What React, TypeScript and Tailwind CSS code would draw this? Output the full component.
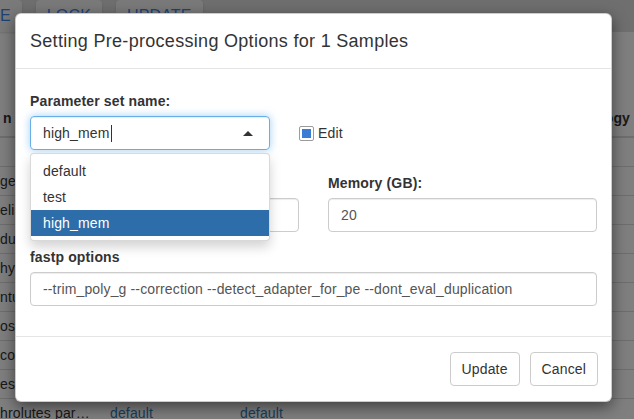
import React from "react";

const rows = [
  { name: "", a: "", b: "" },
  { name: "gerium sp.", a: "default", b: "default" },
  { name: "elisiae", a: "default", b: "default" },
  { name: "duluensis", a: "default", b: "default" },
  { name: "hyrii", a: "default", b: "default" },
  { name: "ntum", a: "default", b: "default" },
  { name: "osus", a: "default", b: "default" },
  { name: "coli", a: "default", b: "default" },
  { name: "es", a: "default", b: "default" },
  { name: "hrolutes parasiticus", a: "default", b: "default" },
];

const options = ["default", "test", "high_mem"];

const BackgroundPage = () => (
  <div className="flex flex-col">
    {/* Toolbar */}
    <div className="flex h-[32px] items-start gap-[14px] bg-[#dedede]">
      <button className="-ml-[11px] h-[32px] rounded-[4px] bg-[#f5f5f5] px-[11px] text-[16px] uppercase text-[#3d84ee] shadow">
        E
      </button>
      <button className="h-[32px] rounded-[4px] bg-[#f5f5f5] px-[11px] text-[16px] uppercase text-[#3d84ee] shadow">
        Lock
      </button>
      <button className="h-[32px] rounded-[4px] bg-[#f5f5f5] px-[11px] text-[16px] uppercase text-[#3d84ee] shadow">
        Update
      </button>
    </div>

    <div className="h-[68px]" />

    {/* Table */}
    <div className="flex h-[38px] items-center border-b-2 border-[#ddd] font-bold">
      <div className="w-[102px] pl-[3px]">n</div>
      <div className="w-[130px] px-2">Parameter</div>
      <div className="flex-1 px-2">Preset</div>
      <div className="pr-[4px] text-right">Technology</div>
    </div>
    {rows.map((r, i) => (
      <div key={i} className="flex h-[29px] items-center border-b border-[#ddd]">
        <div className="w-[102px] truncate pr-[6px]">{r.name}</div>
        <div className="w-[130px] px-2 text-[#337ab7]">{r.a}</div>
        <div className="flex-1 px-2 text-[#337ab7]">{r.b}</div>
      </div>
    ))}
  </div>
);

const TextInput = ({ value }: { value: string }) => (
  <div className="flex h-[34px] items-center rounded-[4px] border border-[#ccc] px-[12px] text-[#555] shadow-[inset_0_1px_1px_rgba(0,0,0,0.075)]">
    {value}
  </div>
);

const App = () => {
  return (
    <div className="relative h-[419px] w-[634px] overflow-hidden bg-white font-['Liberation_Sans',Arial,sans-serif] text-[14px] leading-[20px] tracking-[0.14px] text-[#333]">
      <BackgroundPage />

      {/* Backdrop */}
      <div className="absolute inset-0 bg-black/50" />

      {/* Modal */}
      <div className="absolute left-[15px] top-[13px] w-[597px] rounded-[6px] border border-black/20 bg-white shadow-[0_5px_15px_rgba(0,0,0,0.5)]">
        <div className="border-b border-[#e5e5e5] px-[14px] py-[14px]">
          <h4 className="m-0 text-[18px] leading-[26px] tracking-[0.3px] text-[#333]">
            Setting Pre-processing Options for 1 Samples
          </h4>
        </div>

        <div className="px-[14px] pb-[15px] pt-[22px]">
          {/* Parameter set row */}
          <div className="flex items-start">
            <div className="relative w-[240px]">
              <label className="mb-[5px] block font-bold">Parameter set name:</label>
              <div className="flex h-[34px] items-center rounded-[4px] border border-[#66afe9] pl-[12px] pr-[16px] shadow-[inset_0_1px_1px_rgba(0,0,0,0.075),0_0_8px_rgba(102,175,233,0.6)]">
                <span>high_mem</span>
                <span className="ml-px h-[17px] w-px bg-[#333]" />
                <span className="ml-auto h-0 w-0 border-x-[5px] border-b-[5px] border-x-transparent border-b-[#333]" />
              </div>

              {/* Dropdown */}
              <div className="absolute left-0 right-0 top-[calc(100%+3px)] z-10 rounded-[4px] border border-black/15 bg-white py-[4px] shadow-[0_6px_12px_rgba(0,0,0,0.175)]">
                {options.map((o) => (
                  <div
                    key={o}
                    className={
                      o === "high_mem"
                        ? "flex h-[26px] items-center bg-[#2d6da9] px-[12px] text-white"
                        : "flex h-[26px] items-center px-[12px] text-[#333]"
                    }
                  >
                    {o}
                  </div>
                ))}
              </div>
            </div>

            <div className="ml-[29px] mt-[25px] flex h-[34px] items-center gap-[4px]">
              <span className="flex h-[15px] w-[15px] items-center justify-center rounded-[2px] border border-[#9b9b9b] bg-white">
                <span className="h-[9px] w-[9px] bg-[#3a7dd2]" />
              </span>
              <span>Edit</span>
            </div>
          </div>

          {/* CPU / memory row */}
          <div className="mt-[23px] grid grid-cols-2 gap-x-[29px]">
            <div>
              <label className="mb-[5px] block font-bold">CPUs:</label>
              <TextInput value="4" />
            </div>
            <div>
              <label className="mb-[5px] block font-bold">Memory (GB):</label>
              <TextInput value="20" />
            </div>
          </div>

          {/* fastp options */}
          <div className="mt-[15px] mb-[15px]">
            <label className="mb-[5px] block font-bold">fastp options</label>
            <TextInput value="--trim_poly_g --correction --detect_adapter_for_pe --dont_eval_duplication" />
          </div>
        </div>

        <div className="flex justify-end gap-[10px] border-t border-[#e5e5e5] pl-[14px] pr-[13px] py-[15px]">
          <button className="h-[34px] rounded-[4px] border border-[#ccc] bg-white px-[11px] text-[#333]">
            Update
          </button>
          <button className="h-[34px] rounded-[4px] border border-[#ccc] bg-white px-[11px] text-[#333]">
            Cancel
          </button>
        </div>
      </div>
    </div>
  );
};

export default App;
